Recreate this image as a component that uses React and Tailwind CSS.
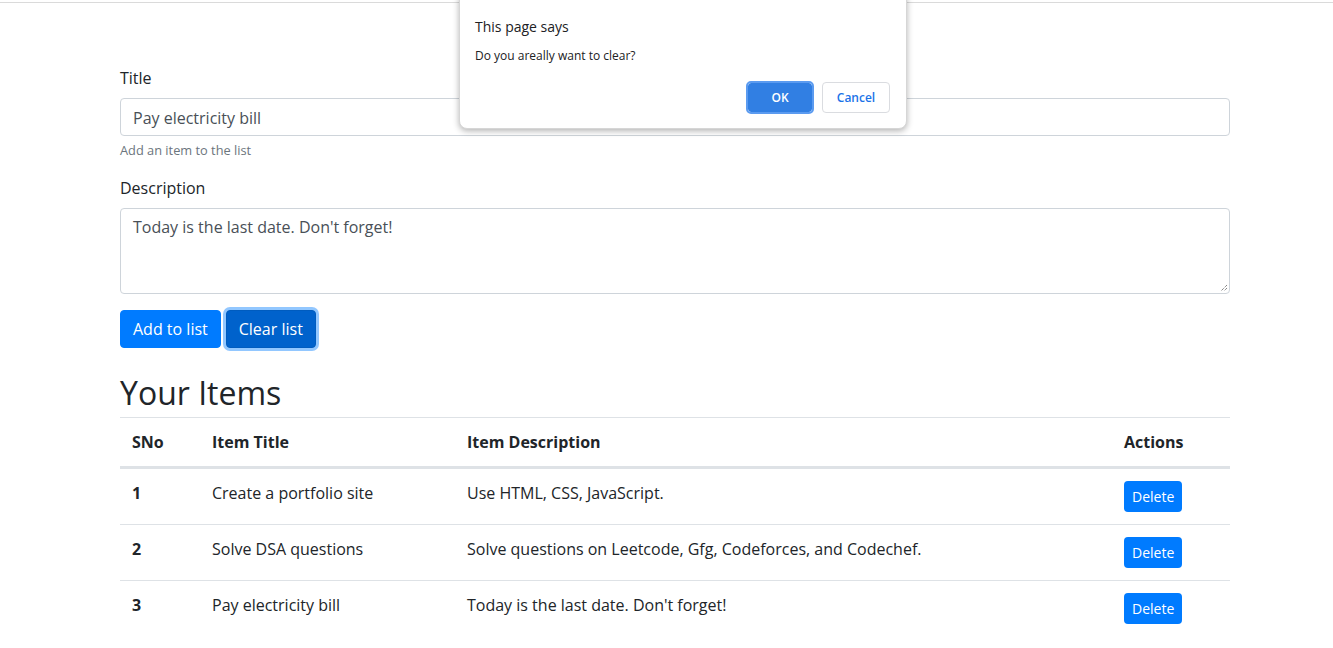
const items = [
	{ sno: 1, title: "Create a portfolio site", desc: "Use HTML, CSS, JavaScript." },
	{ sno: 2, title: "Solve DSA questions", desc: "Solve questions on Leetcode, Gfg, Codeforces, and Codechef." },
	{ sno: 3, title: "Pay electricity bill", desc: "Today is the last date. Don't forget!" },
];

const font = { fontFamily: '"Open Sans", "Noto Sans", sans-serif' };

const ConfirmDialog = () => {
	return (
		<div className="absolute left-[459px] top-[-8px] w-[448px] h-[137px] bg-white rounded-lg border border-[#d6d6d6] shadow-[0_2px_6px_rgba(0,0,0,0.3)] pl-[15px] pr-4 pt-[24px]">
			<div className="text-[14px] leading-[20px] text-[#202124]">This page says</div>
			<div className="mt-[11px] text-[12px] leading-[16px] text-[#202124]">Do you areally want to clear?</div>
			<div className="flex justify-end gap-[9px] mt-[18px]">
				<button className="w-[66px] h-[31px] rounded bg-[#317fe3] text-white text-[12px] font-semibold outline outline-2 outline-[#5b9bf0] outline-offset-[-1px] border border-white">
					OK
				</button>
				<button className="w-[68px] h-[31px] rounded border border-[#dadce0] bg-white text-[#1a73e8] text-[12px] font-semibold">
					Cancel
				</button>
			</div>
		</div>
	);
};

const App = () => {
	return (
		<div className="relative min-h-[648px] bg-white text-[#212529] text-[16px]" style={font}>
			<div className="h-[2px]"></div>
			<div className="h-[1px] bg-[#dadada]"></div>

			<div className="w-[1110px] ml-[120px] pt-[63px]">
				<div className="mb-[16px]">
					<label className="block mb-[8px] leading-[24px]">Title</label>
					<div className="h-[38px] border border-[#ced4da] rounded px-[12px] pt-[1px] flex items-center text-[#495057]">
						Pay electricity bill
					</div>
					<div className="mt-[5px] text-[12.8px] leading-[19px] text-[#6c757d]">Add an item to the list</div>
				</div>

				<div className="mb-[16px]">
					<label className="block mb-[8px] leading-[24px]">Description</label>
					<div className="relative h-[86px] border border-[#ced4da] rounded px-[12px] py-[6px] leading-[24px] text-[#495057]">
						Today is the last date. Don't forget!
						<svg className="absolute right-[1px] bottom-[1px]" width="9" height="9" viewBox="0 0 9 9">
							<path d="M8 2 L2 8 M8 5 L5 8" stroke="#555" strokeWidth="1" strokeDasharray="1 1" />
						</svg>
					</div>
				</div>

				<div className="flex gap-[5px]">
					<button className="h-[38px] px-[12px] rounded bg-[#007bff] border border-[#007bff] text-white leading-[24px]">
						Add to list
					</button>
					<button className="h-[38px] px-[12px] rounded bg-[#0062cc] border border-[#005cbf] text-white leading-[24px] shadow-[0_0_0_3px_rgba(38,143,255,0.5)]">
						Clear list
					</button>
				</div>

				<h2 className="mt-[26px] mb-[5px] text-[32px] leading-[38px] font-medium">Your Items</h2>

				<table className="w-full border-collapse">
					<thead>
						<tr className="border-t border-[#dee2e6] border-b-[3px]">
							<th className="w-[80px] p-[12px] text-left align-bottom font-bold leading-[24px]">SNo</th>
							<th className="w-[255px] p-[12px] text-left align-bottom font-bold leading-[24px]">Item Title</th>
							<th className="w-[657px] p-[12px] text-left align-bottom font-bold leading-[24px]">Item Description</th>
							<th className="p-[12px] text-left align-bottom font-bold leading-[24px]">Actions</th>
						</tr>
					</thead>
					<tbody>
						{items.map((item, index) => (
							<tr key={item.sno} className={index !== 0 ? "border-t border-[#dee2e6]" : ""}>
								<td className="p-[12px] align-top font-bold leading-[24px]">{item.sno}</td>
								<td className="p-[12px] align-top leading-[24px]">{item.title}</td>
								<td className="p-[12px] align-top leading-[24px]">{item.desc}</td>
								<td className="p-[12px] align-top">
									<button className="block h-[31px] px-[8px] rounded bg-[#007bff] text-white text-[14px] leading-[21px]">
										Delete
									</button>
								</td>
							</tr>
						))}
					</tbody>
				</table>
			</div>

			<ConfirmDialog />
		</div>
	);
};

export default App;
